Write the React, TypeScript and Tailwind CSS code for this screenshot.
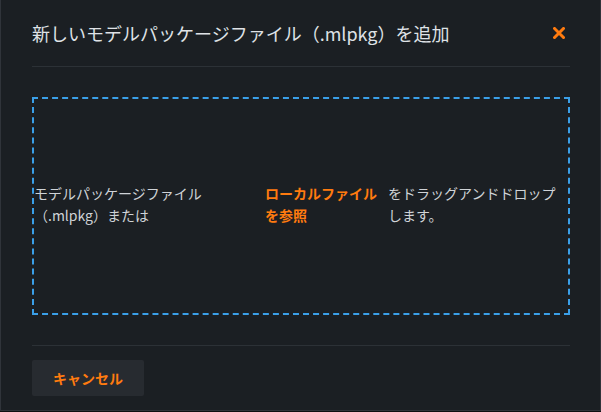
import { X } from 'lucide-react';

function CloseIcon() {
  return (
    <svg width="12" height="12" viewBox="0 0 12 12" aria-hidden="true">
      <path d="M1.5 1.5 L10.5 10.5 M10.5 1.5 L1.5 10.5" stroke="#ff7b0f" strokeWidth="3" strokeLinecap="square" />
    </svg>
  );
}

export default function App() {
  void X;
  return (
    <div
      className="w-[601px] h-[412px] bg-[#0f1113] overflow-hidden"
      style={{ fontFamily: '"Noto Sans CJK JP", "Noto Sans", sans-serif' }}
    >
      <div className="w-[601px] h-[411px] bg-[#1b1f23] border-l border-r border-b border-[#30343a] pl-[31px] pr-[30px] flex flex-col">
        <div className="h-[66px] flex items-center justify-between">
          <h2 className="text-[18px] text-[#dfe2e6] font-normal leading-none">
            新しいモデルパッケージファイル（.mlpkg）を追加
          </h2>
          <button type="button" className="w-[12px] h-[12px] mr-[5px] flex items-center justify-center" aria-label="閉じる">
            <CloseIcon />
          </button>
        </div>
        <div className="h-px bg-[#2c3136]" />

        <div className="mt-[30px] h-[218px] border-2 border-dashed border-[#3a9fe8] flex items-center">
          <div className="flex w-full text-[14px] leading-[22px] text-[#cfd3d7] -mt-[4px]">
            <p className="w-[231px] shrink-0">モデルパッケージファイル（.mlpkg）または</p>
            <p className="w-[123px] shrink-0 font-bold text-[#ff7b0f]">ローカルファイルを参照</p>
            <p className="flex-1">をドラッグアンドドロップします。</p>
          </div>
        </div>

        <div className="mt-[30px] h-px bg-[#2c3136]" />
        <div className="pt-[14px]">
          <button
            type="button"
            className="w-[112px] h-[36px] rounded-[2px] bg-[#272b30] text-[14px] font-bold text-[#ff7b0f]"
          >
            キャンセル
          </button>
        </div>
      </div>
    </div>
  );
}
